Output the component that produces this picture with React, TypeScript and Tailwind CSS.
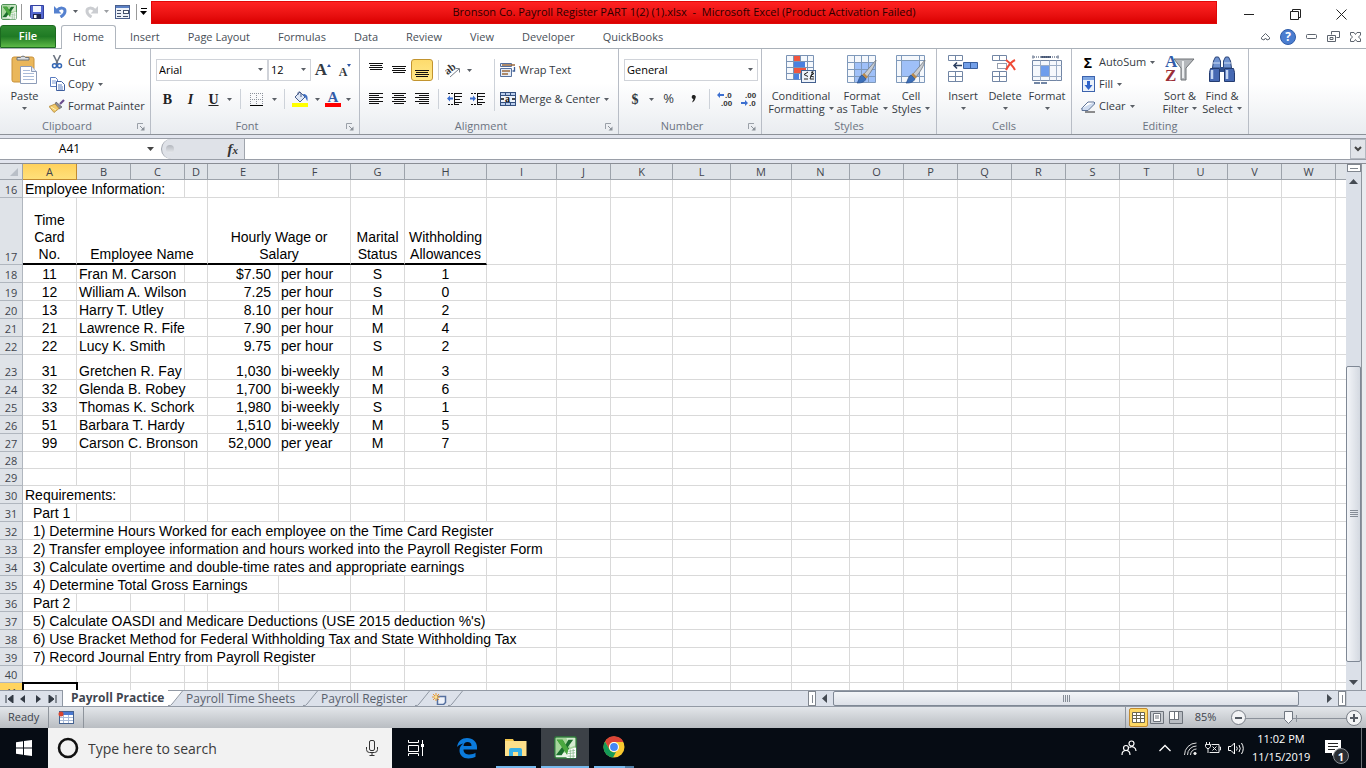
import React from "react";

type Kids = { children?: React.ReactNode };

/* ---------- small shared pieces ---------- */

const Caret = () => (
  <svg width="5" height="3" viewBox="0 0 5 3" className="shrink-0" aria-hidden="true">
    <path d="M0 0h5L2.500 3z" fill="#5a5f66" />
  </svg>
);

const Sep = () => <span className="h-5 w-px shrink-0 bg-[#cdd2d9]" />;

const Launcher = () => (
  <svg width="8" height="8" viewBox="0 0 8 8" aria-hidden="true">
    <path d="M.5 6V.5H6" fill="none" stroke="#9aa0a8" />
    <path d="M3 3l3 3" stroke="#8b9199" />
    <path d="M7.500 3.500v4h-4z" fill="#8b9199" />
  </svg>
);

function Group({ label, width, launcher, children }: Kids & { label: string; width: string; launcher?: boolean }) {
  return (
    <section
      aria-label={label}
      className={`flex h-full shrink-0 flex-col border-r border-[#b8bdc6] bg-linear-to-b from-white from-40% to-[#e9ecf0] ${width}`}
    >
      <div className="flex flex-1 px-[5px] pt-1">{children}</div>
      <div className="flex h-4 items-center text-[#6b7381]">
        <span className="flex-1 text-center">{label}</span>
        {launcher && (
          <button aria-label={`${label} options`} className="w-4 pl-[3px] pt-px">
            <Launcher />
          </button>
        )}
      </div>
    </section>
  );
}

function Small({ icon, text, caret }: { icon: React.ReactNode; text: string; caret?: boolean }) {
  return (
    <button className="flex h-[22px] items-center gap-[3px] whitespace-nowrap">
      <span className="flex w-4 justify-center">{icon}</span>
      {text}
      {caret && <span className="pl-px"><Caret /></span>}
    </button>
  );
}

function Big({ icon, lines, width }: { icon: React.ReactNode; lines: string[]; width: string }) {
  return (
    <button className={`flex shrink-0 flex-col items-center whitespace-nowrap leading-[13px] ${width}`}>
      <span className="flex h-8 items-center justify-center">{icon}</span>
      <span className="mt-1">{lines[0]}</span>
      <span className="flex h-[13px] items-center gap-1">
        {lines[1]}
        <Caret />
      </span>
    </button>
  );
}

function Tool({ label, width, active, children }: Kids & { label: string; width: string; active?: boolean }) {
  return (
    <button
      aria-label={label}
      className={`flex h-[22px] shrink-0 items-center justify-center ${width} ${
        active ? "rounded-[3px] border border-[#c2942f] bg-linear-to-b from-[#fddb6d] to-[#ffe88a]" : ""
      }`}
    >
      {children}
    </button>
  );
}

function Picker({ label, value, options, width }: { label: string; value: string; options: string[]; width: string }) {
  return (
    <label className={`relative flex h-[22px] shrink-0 items-center border border-[#d0d3d9] bg-white ${width}`}>
      <select
        aria-label={label}
        defaultValue={value}
        className="h-full w-full appearance-none bg-transparent pl-[2px] text-black outline-none"
      >
        {options.map((o) => (
          <option key={o}>{o}</option>
        ))}
      </select>
      <span className="pointer-events-none absolute right-1 top-2">
        <Caret />
      </span>
    </label>
  );
}

const Lines = ({ rows, y = 0 }: { rows: [number, number][]; y?: number }) => (
  <svg width="14" height="14" viewBox="0 0 14 14" shapeRendering="crispEdges" aria-hidden="true">
    {rows.map(([x, w], i) => (
      <rect key={i} x={x} y={y + i * 2} width={w} height="1" fill="#111" />
    ))}
  </svg>
);

/* ---------- icons ---------- */

const ExcelIcon = ({ size }: { size: number }) => (
  <svg width={size} height={size} viewBox="0 0 24 24" aria-hidden="true">
    <rect x="1" y="1" width="22" height="22" rx="1.500" fill="#e9f4e6" stroke="#2f7d3a" strokeWidth="1.500" />
    <path d="M2 2h20v10L12 17 2 20z" fill="#a6d59b" />
    <path d="M13 2h9v8l-5 2z" fill="#d5ecd0" />
    <path d="M3 4h6l3 5 3-5h5l-5.500 7.500L20 20h-6l-3-5-3 5H2l6.500-8.500z" fill="#1b6e2d" />
    <path d="M3 4h6l10 16h-5z" fill="#4ba83f" />
    <path d="M15 14l8-2v11H13z" fill="#fff" />
    <path d="M15 16l7-1M14 18.500l8-1M14 21h8M17 14v9M20 13.500V23" stroke="#86b98a" strokeWidth=".8" />
  </svg>
);

const SaveIcon = () => (
  <svg width="14" height="14" viewBox="0 0 14 14" aria-hidden="true">
    <path d="M.5.5h13v13h-12l-1-1z" fill="#5468cf" stroke="#3341a0" />
    <rect x="3" y="1" width="8" height="6" fill="#f4f6fd" />
    <rect x="3" y="9" width="8" height="5" fill="#20264f" />
    <rect x="4" y="10" width="2.500" height="3" fill="#fff" />
  </svg>
);

const Undo = ({ color, flip }: { color: string; flip?: boolean }) => (
  <svg width="13" height="12" viewBox="0 0 13 12" aria-hidden="true">
    <g transform={flip ? "matrix(-1 0 0 1 13 0)" : undefined}>
      <path d="M3 4.500c3-3.500 8-3 8 .5 0 2.500-2 4.500-4.500 6" fill="none" stroke={color} strokeWidth="3" />
      <path d="M0 0v7.500h7.500z" fill={color} />
    </g>
  </svg>
);

const FormIcon = () => (
  <svg width="15" height="14" viewBox="0 0 15 14" shapeRendering="crispEdges" aria-hidden="true">
    <rect x=".5" y=".5" width="14" height="13" fill="#eef2f9" stroke="#4a5f8c" />
    <rect x="1" y="1" width="13" height="2" fill="#5b80c4" />
    <path d="M2 5.500h4M2 8.500h4M2 11.500h4M8 11.500h5" stroke="#44516b" />
    <path d="M8 5.500h5v3H8z" fill="#fff" stroke="#44516b" />
  </svg>
);

const PasteIcon = () => (
  <svg width="27" height="31" viewBox="0 0 27 31" aria-hidden="true">
    <rect x="1" y="3" width="22" height="25" rx="2" fill="#eab75b" stroke="#c8913a" />
    <path d="M6 6V3.500h3.500a3 3 0 0 1 5 0H18V6z" fill="#d9dde2" stroke="#6c7279" />
    <path d="M9.500 12.500h11l5 5v12h-16z" fill="#fff" stroke="#8d9cb8" />
    <path d="M20.500 12.500v5h5" fill="#e3eaf7" stroke="#8d9cb8" />
    <path d="M12 16.500h7M12 19.500h11M12 22.500h11M12 25.500h11" stroke="#a9bbd8" />
  </svg>
);

const CutIcon = () => (
  <svg width="12" height="14" viewBox="0 0 12 14" aria-hidden="true">
    <path d="M2.500 0l4.500 9M9.500 0L5 9" stroke="#6b7380" strokeWidth="1.600" />
    <circle cx="3.500" cy="10.800" r="2" fill="none" stroke="#3467b5" strokeWidth="1.500" />
    <circle cx="8.500" cy="10.800" r="2" fill="none" stroke="#3467b5" strokeWidth="1.500" />
  </svg>
);

const CopyIcon = () => (
  <svg width="15" height="14" viewBox="0 0 15 14" aria-hidden="true">
    <path d="M.5.5h5l2 2v7h-7z" fill="#fff" stroke="#5a7cc0" />
    <path d="M2 4h4M2 6h4" stroke="#7e9bd3" />
    <path d="M6.500 4.500h5l3 3v6h-8z" fill="#fff" stroke="#3f5f9f" />
    <path d="M8 8h4M8 10h5M8 12h5" stroke="#5a7cc0" />
  </svg>
);

const BrushIcon = () => (
  <svg width="16" height="14" viewBox="0 0 16 14" aria-hidden="true">
    <path d="M11 5l4-4" stroke="#6a4b8c" strokeWidth="2.200" />
    <path d="M7 3l6 5-3 2-4-4z" fill="#8c8c94" stroke="#5b5b63" strokeWidth=".7" />
    <path d="M6 5l4 4.500L5 13.500 0 7.500z" fill="#f0c96a" stroke="#b4893a" strokeWidth=".8" />
    <path d="M2 8l5 3" stroke="#fff3c0" />
  </svg>
);

const BordersIcon = () => (
  <svg width="13" height="13" viewBox="0 0 13 13" shapeRendering="crispEdges" aria-hidden="true">
    <path d="M0 .5h13M0 6.500h13M.5 0v12M6.500 0v12M12.500 0v12" stroke="#8c929b" strokeDasharray="1 1" />
    <path d="M0 12.500h13" stroke="#000" />
  </svg>
);

const BucketIcon = () => (
  <svg width="17" height="16" viewBox="0 0 17 16" aria-hidden="true">
    <path d="M3 6l5-5 5 5-5 5z" fill="#dfe8f6" stroke="#4a5f8c" />
    <path d="M6 4c-1-4 3-4 3-1v3" fill="none" stroke="#4a5f8c" />
    <path d="M11 3c4 0 5 2 4.500 7-1.500-1-1.500-4-3-4z" fill="#3f6fc2" />
    <rect y="12" width="16" height="4" fill="#ff0" />
  </svg>
);

const OrientIcon = () => (
  <svg width="17" height="16" viewBox="0 0 17 16" aria-hidden="true">
    <text x="1" y="11" fontSize="11" fontFamily="Liberation Serif" fontWeight="bold" fill="#333" transform="rotate(-38 5 10)">ab</text>
    <path d="M5 15L14 7M10.500 6.500h4v4" fill="none" stroke="#777e88" />
  </svg>
);

const Indent = ({ left }: { left?: boolean }) => (
  <svg width="16" height="14" viewBox="0 0 16 14" aria-hidden="true">
    <path d="M1 1.500h2M4 1.500h2M7 1.500h8M7 4.500h8M7 7.500h6M7 10.500h8M1 12.500h2M4 12.500h2M7 12.500h5M7.500 2v10" stroke="#111" />
    <path d={left ? "M0 6.500l3-3v2h3v2H3v2z" : "M6 6.500l-3-3v2H0v2h3v2z"} fill="#3c6fd0" />
  </svg>
);

const WrapIcon = () => (
  <svg width="16" height="16" viewBox="0 0 16 16" aria-hidden="true">
    <path d="M.5 1.500h11v3H.5zM.5 6.500h11v8H.5z" fill="#e6edf7" stroke="#56719f" />
    <path d="M2 3h13M2 9h8M2 12h6" stroke="#9c6a3c" strokeWidth="1.400" />
    <path d="M14.500 5v4h-2" fill="none" stroke="#3c5d96" strokeWidth="1.300" />
  </svg>
);

const MergeIcon = () => (
  <svg width="16" height="14" viewBox="0 0 16 14" aria-hidden="true">
    <rect x=".5" y=".5" width="15" height="13" fill="#b9cdec" stroke="#34507f" />
    <path d="M5.500 0v3.500M10.500 0v3.500M5.500 10v4M10.500 10v4M0 3.500h16M0 10.500h16" stroke="#34507f" />
    <rect x="1" y="4" width="14" height="6" fill="#eef3fb" />
    <path d="M1 7h3M12 7h3" stroke="#111" strokeWidth="1.400" />
    <text x="5" y="9.500" fontSize="10" fontFamily="Liberation Serif" fontWeight="bold" fill="#111">a</text>
  </svg>
);

const Decimal = ({ more }: { more?: boolean }) => (
  <svg width="16" height="15" viewBox="0 0 16 15" fontFamily="Liberation Sans" fontSize="8" fontWeight="bold" fill="#333" aria-hidden="true">
    <text x={more ? 8 : 4} y="6">{more ? ".0" : ".00"}</text>
    <text x={more ? 4 : 8} y="14">{more ? ".00" : ".0"}</text>
    <path d={more ? "M0 3l3-3v2h4v2H3v2z" : "M7 11l-3-3v2H0v2h4v2z"} fill="#3c6fd0" />
  </svg>
);

const gridPath = "M.5.5h28v27H.5zM.5 7.500h28M.5 14.500h28M.5 21.500h28M7.500.5v27M14.500.5v27M21.500.5v27";

const CondIcon = () => (
  <svg width="31" height="29" viewBox="0 0 31 29" aria-hidden="true">
    <path d="M.5.5h27v24H.5z" fill="#f5f8fc" />
    <path d="M.5.5h27v24H.5zM.5 6.500h27M.5 12.500h27M.5 18.500h27M7.500.5v24M14.500.5v24M21.500.5v24" fill="none" stroke="#7a93b5" />
    <path d="M8 1h6v5H8zM8 13h12v5H8z" fill="#f0553f" />
    <path d="M8 7h11v5H8zM8 19h5v5.500H8z" fill="#4a80e0" />
    <rect x="15.500" y="15.500" width="14" height="12" fill="#eef3fa" stroke="#44618f" />
    <path d="M22 17l-4 2.500 4 2M18 24h4M25 17l3 1.500-3 2M24 21l4 1M24 24h4M27 16l-3 8" stroke="#222" fill="none" />
  </svg>
);

const Brush = () => (
  <g>
    <path d="M29 5c-4 5-8 9-12 14l3 3c4-5 8-11 9-17z" fill="#c9cdd2" stroke="#707780" strokeWidth=".8" />
    <path d="M17 18l4 4-2 2-4-4z" fill="#b98b4e" />
    <path d="M15 20l4 4c-2 4-6 4-9 4 2-2 2-7 5-8z" fill="#3c6fb8" stroke="#2b4f8a" strokeWidth=".7" />
  </g>
);

const TableIcon = () => (
  <svg width="31" height="29" viewBox="0 0 31 29" aria-hidden="true">
    <path d={gridPath} fill="#f5f8fc" />
    <path d="M7.500 7.500h21v20h-21z" fill="#9fc0f8" />
    <path d={gridPath} fill="none" stroke="#7f99bb" />
    <Brush />
  </svg>
);

const CellStyleIcon = () => (
  <svg width="31" height="29" viewBox="0 0 31 29" aria-hidden="true">
    <path d="M.5.5h28v27H.5z" fill="#f5f8fc" stroke="#7f99bb" />
    <path d="M.5 5.500h28M.5 21.500h28M5.500.5v27M23.500.5v27" stroke="#7f99bb" />
    <path d="M6 6h17v15H6z" fill="#9fc0f8" />
    <Brush />
  </svg>
);

const InsertIcon = () => (
  <svg width="31" height="28" viewBox="0 0 31 28" aria-hidden="true">
    <path d="M.5.5h14v5H.5zM7.500.5v5M.5 16.500h14v10H.5zM.5 21.500h14M7.500 16.500v10" fill="#fff" stroke="#7286a5" />
    <path d="M15.500 7.500h14v6h-14zM22.500 7.500v6" fill="#739fe8" stroke="#3a5f9f" />
    <path d="M6 10.500h8M9 7.500l-3 3 3 3" fill="none" stroke="#2b3e60" strokeWidth="1.500" />
  </svg>
);

const DeleteIcon = () => (
  <svg width="26" height="28" viewBox="0 0 26 28" aria-hidden="true">
    <path d="M.5.5h14v5H.5zM7.500.5v5M.5 16.500h14v10H.5zM.5 21.500h14M7.500 16.500v10" fill="#fff" stroke="#7286a5" />
    <path d="M5.500 8.500h9v5h-9z" fill="none" stroke="#2b3e60" strokeDasharray="1 1" />
    <path d="M14 5c4 3 7 6 9 10M23 5c-4 2-7 6-9 10" fill="none" stroke="#ef4a36" strokeWidth="2" />
  </svg>
);

const FormatIcon = () => (
  <svg width="31" height="29" viewBox="0 0 31 29" aria-hidden="true">
    <path d="M1 .5v3M26 .5v3" stroke="#2b3e60" />
    <path d="M2 2h23" stroke="#2b3e60" strokeDasharray="1 1" />
    <path d="M9 2h10" stroke="#2b3e60" strokeWidth="1.500" />
    <path d="M.5 5.500h29v20H.5z" fill="#f5f8fc" stroke="#7286a5" />
    <path d="M.5 10.500h29M.5 21.500h29M8.500 5.500v20M17.500 5.500v20M24.500 5.500v20" stroke="#9cadc6" />
    <rect x="9" y="11" width="8" height="10" fill="#6e9dec" />
    <path d="M2 28h6M9 28h6" stroke="#7286a5" strokeWidth="2" />
  </svg>
);

const FillIcon = () => (
  <svg width="13" height="16" viewBox="0 0 13 16" aria-hidden="true">
    <rect x=".5" y=".5" width="12" height="15" fill="#eaf1fb" stroke="#3c63ad" />
    <rect x="1" y="1" width="11" height="3" fill="#7ea6e2" />
    <path d="M5 5h3v4h2.500l-4 5-4-5H5z" fill="#2e62c9" />
  </svg>
);

const EraserIcon = () => (
  <svg width="15" height="13" viewBox="0 0 15 13" aria-hidden="true">
    <path d="M1 8l6-6h6l-6 7H1z" fill="#fff" stroke="#5e7396" />
    <path d="M1 8v2.500h6L13.500 4V2" fill="#cfdcf0" stroke="#5e7396" />
    <path d="M4 12h10" stroke="#222" />
  </svg>
);

const SortIcon = () => (
  <svg width="30" height="32" viewBox="0 0 30 32" fontFamily="Liberation Serif" fontWeight="bold" aria-hidden="true">
    <path d="M9 6h20l-8 9v12h-5V15z" fill="#b4b7bb" stroke="#6e7276" />
    <path d="M18 8v17" stroke="#eceef0" strokeWidth="2" />
    <text x="0" y="14" fontSize="17" fill="#315ba8">A</text>
    <text x="0" y="28" fontSize="17" fill="#9c2f38">Z</text>
  </svg>
);

const FindIcon = () => (
  <svg width="28" height="27" viewBox="0 0 28 27" aria-hidden="true">
    <path d="M5.500 5l2-4h3l2 4v7h-8zM15.500 5l2-4h3l2 4 1 7h-8z" fill="#6f92d0" stroke="#2b4478" />
    <path d="M2.500 12.500h9v13h-10v-9zM16.500 12.500h9l1 4v9h-10z" fill="#4669b3" stroke="#233b70" />
    <path d="M4 14v9M19 14v9" stroke="#c6d7f3" strokeWidth="2.500" />
    <path d="M12 11h4v5h-4z" fill="#304f8c" />
    <path d="M5 7h7M16 7h7" stroke="#cddcf5" />
  </svg>
);

/* ---------- title bar and tabs ---------- */

function TitleBar() {
  return (
    <header className="flex h-[25px] shrink-0 items-stretch">
      <div className="flex w-[151px] shrink-0 items-center gap-[6px] pb-[2px] pl-px">
        <ExcelIcon size={16} />
        <span className="-mx-[2px] h-4 w-px bg-[#999]" />
        <button aria-label="Save" className="ml-1"><SaveIcon /></button>
        <button aria-label="Undo" className="ml-1 flex items-center gap-[6px]"><Undo color="#5581cf" /><Caret /></button>
        <button aria-label="Redo" className="ml-px flex items-center gap-[6px] opacity-60"><Undo color="#a9adb3" flip /><Caret /></button>
        <button aria-label="Form"><FormIcon /></button>
        <span className="h-4 w-px bg-[#999]" />
        <button aria-label="Customize quick access" className="-ml-[3px] flex flex-col items-center gap-[2px]">
          <span className="h-px w-[6px] bg-black" />
          <svg width="7" height="4" viewBox="0 0 7 4"><path d="M0 0h7L3.500 4z" /></svg>
        </button>
      </div>
      <h1 className="my-px flex flex-1 items-center justify-center whitespace-pre border border-[#e00808] bg-linear-to-b from-[#ff2222] to-[#db0000] text-[11px] text-[#2c0000]">
        {"Bronson Co. Payroll Register PART 1(2) (1).xlsx  -  Microsoft Excel (Product Activation Failed)"}
      </h1>
      <div className="flex w-[149px] shrink-0 pl-[9px] pt-1">
        <button aria-label="Minimize" className="flex w-[46px] items-center justify-center"><svg width="11" height="11" viewBox="0 0 11 11"><path d="M0 5.500h10" stroke="#222" /></svg></button>
        <button aria-label="Restore" className="flex w-[46px] items-center justify-center"><svg width="11" height="11" viewBox="0 0 11 11"><path d="M.5 2.500h8v8h-8zM2.500 2.500v-2h8v8h-2" fill="none" stroke="#222" /></svg></button>
        <button aria-label="Close" className="flex w-[46px] items-center justify-center"><svg width="11" height="11" viewBox="0 0 11 11"><path d="M.5.5l10 10M10.500.5l-10 10" stroke="#222" /></svg></button>
      </div>
    </header>
  );
}

const TABS = ["Insert", "Page Layout", "Formulas", "Data", "Review", "View", "Developer", "QuickBooks"];

function TabStrip() {
  return (
    <nav className="flex h-6 shrink-0 items-stretch border-b border-[#a9b0b8] text-[11px] text-[#494f58]">
      <button className="h-[23px] w-14 shrink-0 rounded-t-[3px] border border-[#1c6a20] bg-linear-to-b from-[#2f8a31] via-[#1f7a24] to-[#5cb947] font-semibold text-white">File</button>
      <button className="-mb-px ml-[5px] w-[55px] shrink-0 rounded-t-[3px] border border-b-0 border-[#b0b6be] bg-white">Home</button>
      {TABS.map((t) => (
        <button key={t} className="shrink-0 whitespace-nowrap px-[14px] pt-px">{t}</button>
      ))}
      <div className="ml-auto flex items-center gap-[10px] pr-[5px] text-[#555c66]">
        <button aria-label="Collapse ribbon"><svg width="9" height="8" viewBox="0 0 9 8"><path d="M.5 6V4.500l4-4 4 4V6L6 7 4.500 5 3 7z" fill="#fff" stroke="#5d646e" /></svg></button>
        <button aria-label="Help" className="flex h-4 w-4 items-center justify-center rounded-full border border-[#2f5ca8] bg-[#4a7dd0] text-[12px] font-bold leading-none text-white">?</button>
        <button aria-label="Minimize window"><svg width="11" height="5" viewBox="0 0 11 5"><rect x=".5" y=".5" width="10" height="4" rx="1" fill="none" stroke="#5d646e" /></svg></button>
        <button aria-label="Restore window"><svg width="13" height="11" viewBox="0 0 13 11"><path d="M4.500 3.500v-3h8v6h-3M.5 4.500h8v6h-8zM3 6.500h3v2H3z" fill="none" stroke="#5d646e" /></svg></button>
        <button aria-label="Close window"><svg width="11" height="10" viewBox="0 0 11 10"><path d="M.5.5H4l1.500 2L7 .5h3.500V3l-2 2 2 2v2.500H7l-1.500-2-1.500 2H.5V7l2-2-2-2z" fill="none" stroke="#5d646e" /></svg></button>
      </div>
    </nav>
  );
}

/* ---------- ribbon ---------- */

function Ribbon() {
  return (
    <div className="flex h-[86px] shrink-0 overflow-hidden border-b border-[#8c9198] bg-linear-to-b from-white from-40% to-[#e9ecf0] text-[11px] text-[#343a42]">
      <Group label="Clipboard" width="w-[151px]" launcher>
        <div className="-ml-[5px]">
          <Big width="w-[49px]" icon={<PasteIcon />} lines={["Paste", ""]} />
        </div>
        <div className="-mt-1 flex flex-col pt-[2px]">
          <Small icon={<CutIcon />} text="Cut" />
          <Small icon={<CopyIcon />} text="Copy" caret />
          <Small icon={<BrushIcon />} text="Format Painter" />
        </div>
      </Group>

      <Group label="Font" width="w-[209px]" launcher>
        <div className="flex flex-1 flex-col gap-[7px] pt-[6px]">
          <div className="flex items-center">
            <Picker label="Font" value="Arial" options={["Arial", "Calibri"]} width="w-[112px]" />
            <Picker label="Font size" value="12" options={["10", "11", "12", "14"]} width="w-[43px]" />
            <Tool label="Grow font" width="w-6">
              <span className="font-[Liberation_Serif] text-[17px] font-bold">A</span>
              <svg width="4" height="12" viewBox="0 0 4 12"><path d="M0 3h4L2 0z" fill="#2d56a5" /></svg>
            </Tool>
            <Tool label="Shrink font" width="w-5">
              <span className="mt-1 font-[Liberation_Serif] text-[12px] font-bold">A</span>
              <svg width="4" height="12" viewBox="0 0 4 12"><path d="M0 0h4L2 3z" fill="#2d56a5" /></svg>
            </Tool>
          </div>
          <div className="flex items-center font-[Liberation_Serif] text-[14px] font-bold text-[#222]">
            <Tool label="Bold" width="w-[23px]">B</Tool>
            <Tool label="Italic" width="w-[23px]"><i>I</i></Tool>
            <Tool label="Underline" width="w-[23px]"><u>U</u></Tool>
            <Tool label="Underline style" width="w-[9px]"><Caret /></Tool>
            <span className="w-[6px]" /><Sep />
            <Tool label="Borders" width="w-[31px]"><BordersIcon /></Tool>
            <Tool label="Border style" width="w-[5px]"><Caret /></Tool>
            <span className="w-[7px]" /><Sep />
            <Tool label="Fill color" width="w-[30px]"><BucketIcon /></Tool>
            <Tool label="Fill color menu" width="w-[5px]"><Caret /></Tool>
            <Tool label="Font color" width="w-[26px]">
              <span className="w-4 border-b-4 border-[#f00] text-center text-[15px] leading-[12px] text-[#315ba8]">A</span>
            </Tool>
            <Tool label="Font color menu" width="w-[5px]"><Caret /></Tool>
          </div>
        </div>
      </Group>

      <Group label="Alignment" width="w-[259px]" launcher>
        <div className="flex flex-1 gap-[5px] pt-[6px]">
          <div className="flex flex-col gap-[7px]">
            <div className="flex items-center gap-px">
              <Tool label="Top align" width="w-[22px]"><Lines rows={[[0, 14], [1, 12], [0, 14], [1, 12]]} /></Tool>
              <Tool label="Middle align" width="w-[22px]"><Lines y={3} rows={[[0, 14], [1, 12], [0, 14], [1, 12]]} /></Tool>
              <Tool label="Bottom align" width="w-[22px]" active><Lines y={7} rows={[[0, 14], [1, 12], [0, 14], [1, 12]]} /></Tool>
              <span className="w-[3px]" /><Sep />
              <Tool label="Orientation" width="w-[26px]"><OrientIcon /></Tool>
              <Caret />
            </div>
            <div className="flex items-center gap-px">
              <Tool label="Align left" width="w-[22px]"><Lines y={1} rows={[[0, 14], [0, 10], [0, 14], [0, 10], [0, 14], [0, 10]]} /></Tool>
              <Tool label="Center" width="w-[22px]"><Lines y={1} rows={[[0, 14], [2, 10], [0, 14], [2, 10], [0, 14], [2, 10]]} /></Tool>
              <Tool label="Align right" width="w-[22px]"><Lines y={1} rows={[[0, 14], [4, 10], [0, 14], [4, 10], [0, 14], [4, 10]]} /></Tool>
              <span className="w-[3px]" /><Sep />
              <span className="w-[3px]" />
              <Tool label="Decrease indent" width="w-[22px]"><Indent left /></Tool>
              <Tool label="Increase indent" width="w-[22px]"><Indent /></Tool>
            </div>
          </div>
          <span className="h-[52px] w-px bg-[#cdd2d9]" />
          <div className="flex flex-col gap-[7px]">
            <Small icon={<WrapIcon />} text="Wrap Text" />
            <Small icon={<MergeIcon />} text="Merge & Center" caret />
          </div>
        </div>
      </Group>

      <Group label="Number" width="w-[143px]" launcher>
        <div className="flex flex-1 flex-col gap-[7px] pt-[6px]">
          <Picker label="Number format" value="General" options={["General", "Number", "Currency"]} width="w-full" />
          <div className="flex items-center text-[14px]">
            <Tool label="Accounting format" width="w-[22px]"><span className="font-[Liberation_Serif] font-bold">$</span></Tool>
            <Tool label="Accounting menu" width="w-[10px]"><Caret /></Tool>
            <Tool label="Percent" width="w-[25px]"><span className="text-[13px]">%</span></Tool>
            <Tool label="Comma" width="w-6"><svg width="5" height="8" viewBox="0 0 5 8"><path d="M1 1a2 2 0 1 1 3.500 2C4 5 3 7 1 7.500L2.500 4A2 2 0 0 1 1 1z" fill="#222" /></svg></Tool>
            <span className="w-1" /><Sep />
            <Tool label="Increase decimal" width="w-[30px]"><Decimal more /></Tool>
            <Tool label="Decrease decimal" width="w-[18px]"><Decimal /></Tool>
          </div>
        </div>
      </Group>

      <Group label="Styles" width="w-[175px]">
        <Big width="w-[68px]" icon={<CondIcon />} lines={["Conditional", "Formatting"]} />
        <Big width="w-[54px]" icon={<TableIcon />} lines={["Format", "as Table"]} />
        <Big width="w-[44px]" icon={<CellStyleIcon />} lines={["Cell", "Styles"]} />
      </Group>

      <Group label="Cells" width="w-[135px]">
        <Big width="w-[42px]" icon={<InsertIcon />} lines={["Insert", ""]} />
        <Big width="w-[42px]" icon={<DeleteIcon />} lines={["Delete", ""]} />
        <Big width="w-[42px]" icon={<FormatIcon />} lines={["Format", ""]} />
      </Group>

      <Group label="Editing" width="w-[177px]">
        <div className="-mt-1 flex w-[82px] flex-col pl-[3px] pt-[2px]">
          <Small icon={<span className="text-[14px] font-bold text-black">Σ</span>} text="AutoSum" caret />
          <Small icon={<FillIcon />} text="Fill" caret />
          <Small icon={<EraserIcon />} text="Clear" caret />
        </div>
        <Big width="w-[42px]" icon={<SortIcon />} lines={["Sort &", "Filter"]} />
        <Big width="w-[42px]" icon={<FindIcon />} lines={["Find &", "Select"]} />
      </Group>
    </div>
  );
}

function FormulaBar() {
  return (
    <div className="shrink-0 border-b border-[#8a8d95] bg-[#e2e5ee] pb-[3px] pt-[3px]">
      <div className="flex h-[22px] items-stretch border-y border-[#9a9fa8] bg-white">
        <label className="flex w-[161px] items-center pr-[7px]">
          <input aria-label="Name box" defaultValue="A41" className="w-full min-w-0 bg-transparent pr-2 text-center text-[12px] text-black outline-none" />
          <svg width="7" height="4" viewBox="0 0 7 4" className="shrink-0"><path d="M0 0h7L3.500 4z" fill="#444" /></svg>
        </label>
        <div className="flex w-[84px] items-center justify-between rounded-l-full border-l border-r border-[#a0a5ad] bg-[#dfe2e8] pl-1 pr-[6px]">
          <span className="h-2 w-2 rounded-full bg-linear-to-b from-[#b3b7be] to-[#e6e8ec]" />
          <button className="font-[Liberation_Serif] text-[15px] font-bold italic leading-none text-[#333]">f<span className="text-[11px]">x</span></button>
        </div>
        <input aria-label="Formula" className="min-w-0 flex-1 bg-white px-1 outline-none" />
        <button aria-label="Expand formula bar" className="flex w-4 items-center justify-center border border-[#b3b8c0] bg-[#e1e4e9]">
          <svg width="8" height="6" viewBox="0 0 8 6"><path d="M1 1l3 3 3-3" fill="none" stroke="#444" strokeWidth="2" /></svg>
        </button>
      </div>
    </div>
  );
}

/* ---------- worksheet ---------- */

const COLS = [23, 54, 54, 54, 23, 71, 72, 54, 82, 70, 54, 62, 58, 61, 58, 54, 54, 54, 54, 54, 54, 54, 54, 54, 54];
const LETTERS = "ABCDEFGHIJKLMNOPQRSTUVW".split("");
const TOTAL = COLS.length - 1;

type Cell = { text?: string; span?: number; cls?: string };
type Row = { n: number; h: string; cells: Cell[] };

const c = "text-center";
const employee = (n: number, no: string, name: string, span: number, pay: string, per: string, status: string, allow: string, h = "h-[18px]"): Row => ({
  n,
  h,
  cells: [
    { text: no, cls: c },
    { text: name, span, cls: "pl-[2px]" },
    ...(span === 2 ? [{}] : []),
    { text: pay, cls: "text-right pr-[7px]" },
    { text: per, cls: "pl-[2px]" },
    { text: status, cls: c },
    { text: allow, cls: c },
  ],
});
const note = (n: number, text: string, span: number, cls = "pl-[10px]"): Row => ({ n, h: "h-[18px]", cells: [{ text, span, cls }] });

const head = "text-center border-b-2 border-b-black";
const ROWS: Row[] = [
  note(16, "Employee Information:", 3, "pl-[2px]"),
  {
    n: 17,
    h: "h-[67px]",
    cells: [
      { text: "Time\nCard\nNo.", cls: head },
      { text: "Employee Name", span: 3, cls: head },
      { text: "Hourly Wage or\nSalary", span: 2, cls: head },
      { text: "Marital\nStatus", cls: head },
      { text: "Withholding\nAllowances", cls: head },
    ],
  },
  employee(18, "11", "Fran M. Carson", 2, "$7.50", "per hour", "S", "1"),
  employee(19, "12", "William A. Wilson", 3, "7.25", "per hour", "S", "0"),
  employee(20, "13", "Harry T. Utley", 2, "8.10", "per hour", "M", "2"),
  employee(21, "21", "Lawrence R. Fife", 3, "7.90", "per hour", "M", "4"),
  employee(22, "22", "Lucy K. Smith", 2, "9.75", "per hour", "S", "2"),
  employee(23, "31", "Gretchen R. Fay", 2, "1,030", "bi-weekly", "M", "3", "h-[25px]"),
  employee(24, "32", "Glenda B. Robey", 3, "1,700", "bi-weekly", "M", "6"),
  employee(25, "33", "Thomas K. Schork", 3, "1,980", "bi-weekly", "S", "1"),
  employee(26, "51", "Barbara T. Hardy", 3, "1,510", "bi-weekly", "M", "5"),
  employee(27, "99", "Carson C. Bronson", 3, "52,000", "per year", "M", "7"),
  { n: 28, h: "h-[17px]", cells: [] },
  { n: 29, h: "h-[17px]", cells: [] },
  note(30, "Requirements:", 2, "pl-[2px]"),
  note(31, "Part 1", 1),
  note(32, "1) Determine Hours Worked for each employee on the Time Card Register", 9),
  note(33, "2) Transfer employee information and hours worked into the Payroll Register Form", 9),
  note(34, "3) Calculate overtime and double-time rates and appropriate earnings", 8),
  note(35, "4) Determine Total Gross Earnings", 5),
  note(36, "Part 2", 1),
  note(37, "5) Calculate OASDI and Medicare Deductions (USE 2015 deduction %'s)", 9),
  note(38, "6) Use Bracket Method for Federal Withholding Tax and State Withholding Tax", 9),
  note(39, "7) Record Journal Entry from Payroll Register", 6),
  { n: 40, h: "h-[17px]", cells: [] },
  { n: 41, h: "h-[18px]", cells: [{ cls: "outline-2 -outline-offset-1 outline-black" }] },
];

function Sheet() {
  return (
    <div className="min-w-0 flex-1 overflow-hidden bg-white">
      <table className="w-[1390px] table-fixed border-separate border-spacing-0 font-[Liberation_Sans] text-[14px] leading-[16px] text-black">
        <colgroup>
          {COLS.map((w, i) => (
            <col key={i} style={{ width: w }} />
          ))}
        </colgroup>
        <thead className="font-[Open_Sans] text-[11px] leading-[15px] text-[#3f454d]">
          <tr className="h-4">
            <th className="border-b border-r border-[#9da3ab] bg-[#dfe3e8] p-0">
              <svg width="8" height="8" viewBox="0 0 8 8" className="ml-auto mr-1"><path d="M8 0v8H0z" fill="#b9bfc7" /></svg>
            </th>
            {LETTERS.map((l) => (
              <th
                key={l}
                scope="col"
                className={`border-b border-r p-0 font-normal ${
                  l === "A" ? "border-[#c28a30] bg-linear-to-b from-[#ffd15c] to-[#ffe07a]" : "border-[#9da3ab] bg-[#dfe3e8]"
                }`}
              >
                {l}
              </th>
            ))}
            <th className="border-b border-[#9da3ab] bg-[#dfe3e8] p-0" />
          </tr>
        </thead>
        <tbody>
          {ROWS.map((row) => {
            const used = row.cells.reduce((s, x) => s + (x.span ?? 1), 0);
            const cells = [...row.cells, ...Array.from({ length: TOTAL - used }, (): Cell => ({}))];
            return (
              <tr key={row.n} className={row.h}>
                <th
                  scope="row"
                  className={`border-b border-r p-0 align-bottom font-[Open_Sans] text-[11px] font-normal leading-[15px] ${
                    row.n === 41 ? "border-[#c28a30] bg-[#ffd45f]" : "border-[#b0b6be] bg-[#dfe3e8]"
                  } text-[#3f454d]`}
                >
                  {row.n}
                </th>
                {cells.map((x, i) => (
                  <td
                    key={i}
                    colSpan={x.span}
                    className={`whitespace-pre border-b border-r border-[#d9d9d9] p-0 align-bottom ${row.n === 17 ? "leading-[17px]" : ""} ${x.cls ?? ""}`}
                  >
                    {x.text}
                  </td>
                ))}
              </tr>
            );
          })}
        </tbody>
      </table>
    </div>
  );
}

function VerticalScroll() {
  return (
    <div className="flex w-5 shrink-0 border-r-4 border-[#e9ebef] bg-[#dbe0e8]">
      <div className="flex w-4 flex-col items-center border-r border-[#8f959e]">
        <div className="flex h-2 w-[14px] shrink-0 items-center justify-center border border-[#80868f] bg-white"><span className="h-px w-2 bg-[#80868f]" /></div>
        <button aria-label="Scroll up" className="flex h-[18px] items-center"><svg width="9" height="5" viewBox="0 0 9 5"><path d="M0 5h9L4.500 0z" fill="#444a52" /></svg></button>
        <div className="w-full flex-[176]" />
        <div className="flex w-[15px] flex-[295] flex-col items-center justify-center gap-px rounded-[2px] border border-[#7f8895] bg-linear-to-r from-[#f3f5f8] to-[#d4d9e1]">
          <span className="h-px w-2 bg-[#858c96]" /><span className="h-px w-2 bg-[#858c96]" /><span className="h-px w-2 bg-[#858c96]" /><span className="h-px w-2 bg-[#858c96]" />
        </div>
        <div className="w-full flex-[12]" />
        <button aria-label="Scroll down" className="flex h-4 items-center"><svg width="9" height="5" viewBox="0 0 9 5"><path d="M0 0h9L4.500 5z" fill="#444a52" /></svg></button>
      </div>
    </div>
  );
}

const Slant = ({ from, to }: { from: string; to: string }) => (
  <svg width="15" height="15" viewBox="0 0 15 15" className="shrink-0" aria-hidden="true">
    <path d="M0 0h15L3 15H0z" fill={from} />
    <path d="M15 0L3 15h12z" fill={to} />
    <path d="M14.500 0L4 13Q3 15 0 14.500" fill="none" stroke="#8f97a3" />
  </svg>
);

function SheetTabs() {
  const nav = ["M1 0v8M8 0v8L3 4z", "M6 0v8L1 4z", "M2 0v8l5-4z", "M1 0v8l5-4zM8 0v8"];
  const names = ["First", "Previous", "Next", "Last"];
  return (
    <div className="flex h-[17px] shrink-0 items-stretch border-b border-t border-[#939aa5] bg-[#dce1ea] text-[12px] leading-[14px] text-[#59606b]">
      <div className="flex w-[63px] shrink-0 items-center justify-around border-r border-[#8f97a3] px-[2px]">
        {nav.map((d, i) => (
          <button key={d} aria-label={`${names[i]} sheet`}><svg width="9" height="8" viewBox="0 0 9 8"><path d={d} fill="#333a44" stroke={i % 3 === 0 ? "#333a44" : "none"} /></svg></button>
        ))}
      </div>
      <button className="-mt-px h-4 w-[105px] shrink-0 whitespace-nowrap bg-white pl-2 text-left font-bold text-[#3f4650]">Payroll Practice</button>
      <Slant from="#fff" to="#dce1ea" />
      <button className="w-[120px] shrink-0 whitespace-nowrap pl-[3px] text-left">Payroll Time Sheets</button>
      <Slant from="#dce1ea" to="#dce1ea" />
      <button className="w-[97px] shrink-0 whitespace-nowrap pl-[3px] text-left">Payroll Register</button>
      <Slant from="#dce1ea" to="#dce1ea" />
      <button aria-label="Insert sheet" className="flex w-[18px] shrink-0 items-center justify-center">
        <svg width="15" height="12" viewBox="0 0 15 12"><path d="M5.500 3.500h8v6l-2 2h-6z" fill="#eef2fa" stroke="#55709f" strokeWidth="1.500" /><path d="M4 0v8M0 4h8M1 1l6 6M7 1L1 7" stroke="#e8962e" /><circle cx="4" cy="4" r="1.500" fill="#ffe28a" /></svg>
      </button>
      <Slant from="#dce1ea" to="#dce1ea" />
      <div className="flex-1" />
      <div className="flex w-[538px] shrink-0 items-stretch">
        <span className="flex w-2 items-center justify-center border border-[#80868f] bg-white"><span className="h-2 w-px bg-[#80868f]" /></span>
        <button aria-label="Scroll left" className="flex w-[17px] items-center justify-center"><svg width="5" height="9" viewBox="0 0 5 9"><path d="M5 0v9L0 4.500z" fill="#444a52" /></svg></button>
        <div className="flex w-[466px] items-center justify-center gap-px rounded-[2px] border border-[#7f8895] bg-linear-to-b from-[#f3f5f8] to-[#dde1e8]">
          <span className="h-[7px] w-px bg-[#858c96]" /><span className="h-[7px] w-px bg-[#858c96]" /><span className="h-[7px] w-px bg-[#858c96]" /><span className="h-[7px] w-px bg-[#858c96]" />
        </div>
        <div className="flex-1" />
        <button aria-label="Scroll right" className="flex w-[17px] items-center justify-center"><svg width="5" height="9" viewBox="0 0 5 9"><path d="M0 0v9l5-4.500z" fill="#444a52" /></svg></button>
        <span className="flex w-2 items-center justify-center border border-[#80868f] bg-white"><span className="h-2 w-px bg-[#80868f]" /></span>
      </div>
      <div className="w-5 shrink-0 border-l border-[#c3c8d0]" />
    </div>
  );
}

function StatusBar() {
  return (
    <footer className="flex h-[21px] shrink-0 items-center bg-linear-to-b from-[#e3e6ea] to-[#b9bdc2] text-[11px] text-[#3d434b]">
      <span className="w-12 pl-2">Ready</span>
      <span className="h-full w-px bg-[#8e949c]" />
      <button aria-label="Record macro" className="w-[34px] pl-[9px]">
        <svg width="16" height="14" viewBox="0 0 16 14"><rect x="1.500" y=".5" width="14" height="12" fill="#fff" stroke="#44618f" /><path d="M2 1h13v3H2z" fill="#4a78d0" /><path d="M2 6.500h13M2 9.500h13M5.500 4v8M10.500 4v8" stroke="#a9bbd8" /><circle cx="3" cy="3" r="2.500" fill="#d8452e" /></svg>
      </button>
      <span className="h-full w-px bg-[#8e949c]" />
      <div className="ml-auto flex h-full items-center">
        <span className="mr-[3px] h-full w-px bg-[#8e949c]" />
        <button aria-label="Normal view" className="flex h-[19px] w-[19px] items-center justify-center rounded-[2px] border border-[#c28a30] bg-[#ffd964]">
          <svg width="13" height="11" viewBox="0 0 13 11"><path d="M.5.5h12v10H.5zM.5 3.500h12M.5 6.500h12M4.500.5v10M8.500.5v10" fill="#fff" stroke="#6b6650" /></svg>
        </button>
        <button aria-label="Page layout view" className="ml-[2px]"><svg width="14" height="13" viewBox="0 0 14 13"><path d="M.5.5h13v12H.5z" fill="#c7cbd0" stroke="#6c727a" /><path d="M3.500 2.500h7v8h-7z" fill="#fff" stroke="#6c727a" /><path d="M5 5h4M5 7h4" stroke="#6c727a" /></svg></button>
        <button aria-label="Page break view" className="ml-[5px]"><svg width="14" height="13" viewBox="0 0 14 13"><path d="M.5.5h13v12H.5z" fill="#b9bdc3" stroke="#6c727a" /><path d="M1 1h4v7H1zM6 1h3v7H6z" fill="#fff" /><path d="M5.500 1v8M9.500 1v8M1 8.500h9" stroke="#6c727a" /></svg></button>
        <span className="w-12 pr-[3px] text-center">85%</span>
        <button aria-label="Zoom out" className="flex h-[15px] w-[15px] items-center justify-center rounded-full border border-[#777d86] bg-[#f2f3f5]"><span className="h-[2px] w-[7px] bg-[#555b64]" /></button>
        <label className="relative flex h-4 w-[100px] items-center">
          <svg width="100" height="14" viewBox="0 0 100 14" aria-hidden="true">
            <path d="M0 7.500h100M50.500 4v7" stroke="#8b919a" />
            <path d="M38.500.5h8v8l-4 4-4-4z" fill="#f6f7f9" stroke="#6f7680" />
          </svg>
          <input type="range" aria-label="Zoom" defaultValue={42} className="absolute inset-0 m-0 w-full opacity-0" />
        </label>
        <button aria-label="Zoom in" className="mr-1 flex h-4 w-4 items-center justify-center rounded-full border border-[#777d86] bg-[#f2f3f5]"><svg width="8" height="8" viewBox="0 0 8 8"><path d="M0 4h8M4 0v8" stroke="#555b64" strokeWidth="2" /></svg></button>
      </div>
    </footer>
  );
}

/* ---------- desktop taskbar ---------- */

function Taskbar() {
  return (
    <div className="flex h-10 shrink-0 items-stretch bg-[#060c14] text-white">
      <button aria-label="Start" className="flex w-12 shrink-0 items-center justify-center">
        <svg width="16" height="16" viewBox="0 0 16 16"><path d="M0 2.200L7 1.200v6.300H0zM8 1l8-1v7.500H8zM0 8.500h7v6.300l-7-1zM8 8.500h8V16l-8-1z" fill="#fff" /></svg>
      </button>
      <label className="flex w-[344px] shrink-0 items-center bg-[#f2f2f2] pl-[9px] pr-[14px]">
        <svg width="22" height="22" viewBox="0 0 22 22" className="shrink-0"><circle cx="11" cy="11" r="9" fill="none" stroke="#111" strokeWidth="2.600" /></svg>
        <input aria-label="Search" placeholder="Type here to search" className="ml-[9px] min-w-0 flex-1 bg-transparent text-[14px] placeholder-[#3b3b3b] outline-none" />
        <svg width="12" height="16" viewBox="0 0 12 16" className="shrink-0"><rect x="3.500" y=".5" width="5" height="10" rx="1.500" fill="none" stroke="#333" /><path d="M.5 7v2.500q0 3 3 3h5q3 0 3-3V7M6 12.500V15M3.500 15.500h5" fill="none" stroke="#333" /></svg>
      </label>
      <button aria-label="Task view" className="flex w-12 shrink-0 items-center justify-center">
        <svg width="17" height="16" viewBox="0 0 17 16"><path d="M.5 0v2.500h10V0M.5 5.500h10v6H.5zM.5 16v-2.500h10V16M14.500 0v16" fill="none" stroke="#fff" /><path d="M13 4h3v3h-3z" fill="#fff" /></svg>
      </button>
      <button aria-label="Edge" className="flex w-[54px] shrink-0 items-center justify-center">
        <svg width="22" height="22" viewBox="0 0 22 22"><path d="M1 10C2 4 6 1 11 1c6 0 10 4 10 9v2.500H7.500c0 4 3 5 6 5 2.500 0 4.500-.7 6-1.700v4C17.500 21 15 21.500 12.500 21.500 7 21.500 3.500 18 3.500 13.500c0-3 1.500-5.500 4-7C5 7 2.500 8 1 10zm6.500-1h8c0-3-1.500-4-4-4-2.300 0-3.800 1.500-4 4z" fill="#0b7bdc" /></svg>
      </button>
      <button aria-label="File Explorer" className="ml-[2px] flex w-10 shrink-0 items-center justify-center border-b-2 border-[#76b9ed]">
        <svg width="22" height="19" viewBox="0 0 22 19"><path d="M0 1h8l1 2h12v15H0z" fill="#f3c64c" /><path d="M0 3h21.500v15H0z" fill="#fde08a" /><path d="M4 18v-6q0-2 2-2h9q2 0 2 2v6h-4v-4H8v4z" fill="#37b0e6" /></svg>
      </button>
      <button aria-label="Excel" className="ml-[5px] flex w-12 shrink-0 items-center justify-center border-b-2 border-[#76b9ed] bg-[#3c4147]"><ExcelIcon size={23} /></button>
      <div className="ml-[5px] flex items-stretch">
        <button aria-label="Chrome" className="flex w-[31px] shrink-0 items-center justify-end overflow-visible border-b-2 border-[#76b9ed]">
          <svg width="22" height="22" viewBox="0 0 22 22" className="shrink-0">
            <circle cx="11" cy="11" r="10.500" fill="#f9c92f" />
            <path d="M2 5.500A10.500 10.500 0 0 1 20.500 6H11a5 5 0 0 0-4.500 7.500z" fill="#dc4437" />
            <path d="M2 5.500l4.500 8A5 5 0 0 0 13 16l-3 5.500A10.500 10.500 0 0 1 2 5.500z" fill="#149a58" />
            <circle cx="11" cy="11" r="5" fill="#fff" /><circle cx="11" cy="11" r="3.900" fill="#4387f5" />
          </svg>
        </button>
        <span className="w-[9px] border-b-2 border-[#4f7ea5]" />
      </div>
      <div className="ml-auto flex items-center">
        <button aria-label="People"><svg width="16" height="16" viewBox="0 0 16 16" fill="none" stroke="#fff" strokeWidth="1.200"><circle cx="10.500" cy="3.500" r="2.500" /><circle cx="5" cy="8" r="2.500" /><path d="M1 15c0-6 8-6 8 0M8.500 7.500c3-2 6.500 0 6.500 3.500" /></svg></button>
        <button aria-label="Show hidden icons" className="ml-[22px]"><svg width="12" height="8" viewBox="0 0 12 8"><path d="M.5 7L6 1.500 11.500 7" fill="none" stroke="#fff" strokeWidth="1.300" /></svg></button>
        <button aria-label="Network" className="ml-[13px]"><svg width="13" height="13" viewBox="0 0 13 13" fill="none" stroke="#ddd"><path d="M.5 13A12 12 0 0 1 12.500 1M3.500 13a9 9 0 0 1 9-9M6.500 13a6 6 0 0 1 6-6" /><circle cx="11" cy="11.500" r="1.200" fill="#fff" /></svg></button>
        <button aria-label="Battery" className="ml-[8px]"><svg width="16" height="12" viewBox="0 0 16 12" fill="none" stroke="#eee"><path d="M1.500 0v2M4.500 0v2M.5 2.500h5v2l-1.500 2H2l-1.500-2zM3 6.500V11M6.500 2.500h7.500v8H4.500M14.500 5h1v3h-1M7.500 4.500l4 4M11.500 4.500l-4 4" /></svg></button>
        <button aria-label="Volume" className="ml-[7px]"><svg width="16" height="13" viewBox="0 0 16 13" fill="none" stroke="#fff"><path d="M.5 4.500h2.500L6.500 1v11L3 8.500H.5zM8.500 4.500q1.500 2 0 4M11 3q2.500 3.500 0 7M13.500 1q3.500 5.500 0 11" /></svg></button>
        <div className="ml-2 w-[58px] text-center text-[11px] leading-[18px]">
          <div className="whitespace-nowrap">11:02 PM</div>
          <div className="whitespace-nowrap">11/15/2019</div>
        </div>
        <button aria-label="Notifications" className="relative ml-[15px] mr-[12px] h-6 w-6">
          <svg width="16" height="18" viewBox="0 0 16 18"><path d="M0 1h16v13h-6l-3 3v-3H0z" fill="#fff" /><path d="M3 4.500h10M3 7.500h10M3 10.500h7" stroke="#222" /></svg>
          <span className="absolute -bottom-1 right-0 flex h-4 w-4 items-center justify-center rounded-full border border-[#8b8f94] bg-[#2a2e33] text-[11px] font-bold leading-none">1</span>
        </button>
        <span className="mr-1 h-10 w-px bg-[#6b7076]" />
      </div>
    </div>
  );
}

export default function App() {
  return (
    <div className="flex h-screen flex-col overflow-hidden bg-white font-['Open_Sans',sans-serif]">
      <TitleBar />
      <TabStrip />
      <Ribbon />
      <FormulaBar />
      <main className="flex min-h-0 flex-1">
        <Sheet />
        <VerticalScroll />
      </main>
      <SheetTabs />
      <StatusBar />
      <Taskbar />
    </div>
  );
}
